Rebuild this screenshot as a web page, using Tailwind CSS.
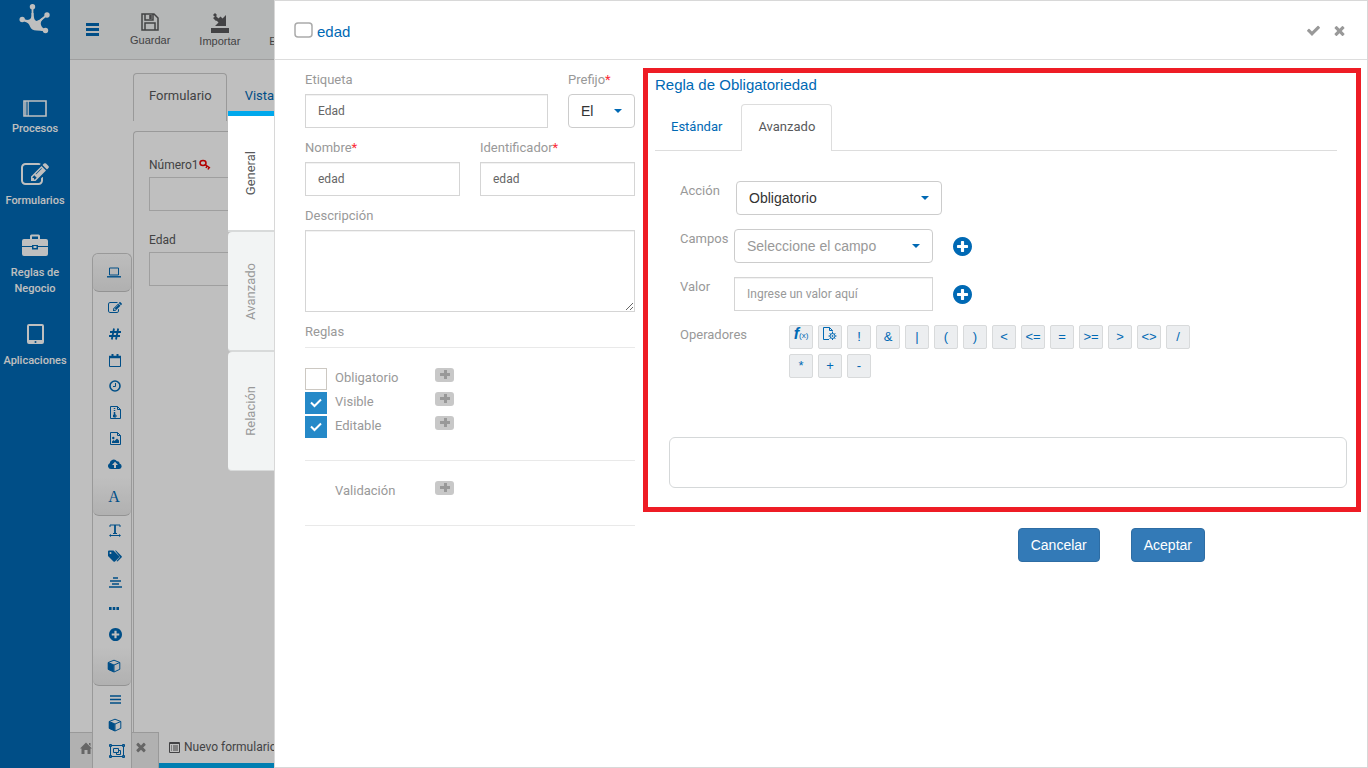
<!DOCTYPE html>
<html lang="es">
<head>
<meta charset="utf-8">
<title>Nuevo formulario</title>
<script src="https://cdn.jsdelivr.net/npm/@tailwindcss/browser@4"></script>
</head>
<body class="relative flex h-screen overflow-hidden bg-white font-['Roboto',sans-serif] text-[13px] leading-5 text-[#58595b]">

<svg class="hidden" aria-hidden="true">
  <symbol id="edit" viewBox="0 0 1792 1792"><path d="M888 1184l116-116-152-152-116 116v56h96v96h56zm440-720q-16-16-33 1l-350 350q-17 17-1 33t33-1l350-350q17-17 1-33zm80 594v190q0 119-84.500 203.500t-203.500 84.500h-832q-119 0-203.500-84.500t-84.500-203.500v-832q0-119 84.500-203.500t203.500-84.500h832q63 0 117 25 15 7 18 23 3 17-9 29l-49 49q-14 14-32 8-23-6-45-6h-832q-66 0-113 47t-47 113v832q0 66 47 113t113 47h832q66 0 113-47t47-113v-126q0-13 9-22l64-64q15-15 35-7t20 29zm-96-738l288 288-672 672h-288v-288zm444 132l-92 92-288-288 92-92q28-28 68-28t68 28l152 152q28 28 28 68t-28 68z"/></symbol>
  <symbol id="plus-circle" viewBox="128 128 1536 1536"><path d="M1344 960v-128q0-26-19-45t-45-19h-256v-256q0-26-19-45t-45-19h-128q-26 0-45 19t-19 45v256h-256q-26 0-45 19t-19 45v128q0 26 19 45t45 19h256v256q0 26 19 45t45 19h128q26 0 45-19t19-45v-256h256q26 0 45-19t19-45zm320-64q0 209-103 385.500t-279.500 279.500-385.500 103-385.500-103-279.500-279.500-103-385.500 103-385.500 279.500-279.500 385.500-103 385.500 103 279.500 279.500 103 385.500z"/></symbol>
  <symbol id="check" viewBox="0 0 1792 1792"><path d="M1671 566q0 40-28 68l-724 724-136 136q-28 28-68 28t-68-28l-136-136-362-362q-28-28-28-68t28-68l136-136q28-28 68-28t68 28l294 295 656-657q28-28 68-28t68 28l136 136q28 28 28 68z"/></symbol>
  <symbol id="times" viewBox="0 0 1792 1792"><path d="M1490 1322q0 40-28 68l-136 136q-28 28-68 28t-68-28l-294-294-294 294q-28 28-68 28t-68-28l-136-136q-28-28-28-68t28-68l294-294-294-294q-28-28-28-68t28-68l136-136q28-28 68-28t68 28l294 294 294-294q28-28 68-28t68 28l136 136q28 28 28 68t-28 68l-294 294 294 294q28 28 28 68z"/></symbol>
  <symbol id="cube" viewBox="0 0 14 14"><path d="M1 3.500 6.800 6v7L1 10.500z"/><path d="M1.200 3.500 7 1.200l5.800 2.300v6.800L7 13 1.200 10.400zM7 6l5.800-2.500M1.200 3.500 7 6v7" fill="none" stroke="currentColor" stroke-linejoin="round"/></symbol>
  <symbol id="caret" viewBox="0 0 8 4"><path d="M0 0h8L4 4z"/></symbol>
  <symbol id="add" viewBox="0 0 19 14"><rect width="19" height="14" rx="3" fill="#c8c8c8"/><path d="M9 2h3v3h3v3h-3v3H9V8H5V5h4z" fill="#999"/></symbol>
</svg>

<nav class="flex w-[70px] shrink-0 flex-col items-center bg-[#0069b4] text-center text-[11px] leading-4 font-medium text-white" aria-label="Principal">
  <svg class="mt-1 h-8 w-8" viewBox="0 0 32 32" fill="currentColor" aria-hidden="true"><g fill="none" stroke="currentColor" stroke-width="1.800"><path d="M13.500 3v10q0 6-10 2.500M12 20q7-1 11-5l5-4M15 23l11 4"/></g><path d="M12.500 9h2q0 7 3 8 3-.5 5.500-3l1 1q-3 3-2 6 1 3 5 4.500v2q-6-1-9.500-1-5 0-6.500-4-1-4-6-5l.5-2q8 2.500 7-6.500z"/><circle cx="13.500" cy="2.800" r="2.700"/><circle cx="3.200" cy="15.500" r="2.700"/><circle cx="28" cy="11" r="2.700"/><circle cx="26.500" cy="26.500" r="2.700"/></svg>
  <a href="#" class="mt-16 flex flex-col items-center"><svg class="h-[17px] w-6" viewBox="0 0 24 17" fill="none" stroke="currentColor" aria-hidden="true"><path d="M1 1h22v15H1z" stroke-width="1.600"/><path d="M2.800 1v15M5.200 1v15" stroke-width="1.200"/></svg><span class="mt-1">Procesos</span></a>
  <a href="#" class="mt-6 flex flex-col items-center"><svg class="h-7 w-7" fill="currentColor" aria-hidden="true"><use href="#edit"/></svg><span class="mt-1">Formularios</span></a>
  <a href="#" class="mt-[25px] flex w-16 flex-col items-center"><svg class="h-[23px] w-[26px]" viewBox="0 0 26 23" fill="currentColor" aria-hidden="true"><path d="M8 5V2q0-1.500 1.500-1.500h7Q18 .5 18 2v3h6q2 0 2 2v5H16v-1h-6v1H0V7q0-2 2-2zm2 0h6V2.500h-6zM0 13h10v2.500h6V13h10v7q0 2-2 2H2q-2 0-2-2zm11.500-1h3v2h-3z"/></svg><span class="mt-2">Reglas de Negocio</span></a>
  <a href="#" class="mt-[25px] flex flex-col items-center"><svg class="h-6 w-[17px]" viewBox="0 0 17 24" fill="currentColor" fill-rule="evenodd" aria-hidden="true"><path d="M2 2h13q2 0 2 2v16q0 2-2 2H2q-2 0-2-2V4q0-2 2-2zm0 2v14h13V4zm6.500 15a1 1 0 100 2 1 1 0 000-2z"/></svg><span class="mt-[7px]">Aplicaciones</span></a>
</nav>

<div class="flex min-w-0 flex-1 flex-col">
  <header class="flex h-[60px] shrink-0 items-center border-b border-[#d4d4d4] bg-[#f2f4f4] pl-4 font-['Liberation_Sans',sans-serif] text-[11px] leading-3">
    <button aria-label="Menú" class="mr-[31px] text-[#0069b4]"><svg class="h-[13px] w-[13px]" viewBox="0 0 13 13" fill="currentColor"><path d="M0 0h13v3H0zM0 5h13v3H0zM0 10h13v3H0z"/></svg></button>
    <button class="mr-[29px] flex flex-col items-center gap-[3px]"><svg class="h-[18px] w-[18px]" viewBox="0 0 18 18" fill="none" stroke="currentColor" stroke-width="1.500"><path d="M1 1h12l4 4v12H1zM4 1v6h8V1M4 17v-7h10v7"/><path d="M9.500 2v4" stroke-width="2.500"/></svg>Guardar</button>
    <button class="mr-[29px] flex flex-col items-center gap-[2px]"><svg class="h-[20px] w-5" viewBox="0 0 20 20" fill="currentColor"><path d="M1 15h18v5H1zM16 2v11H5l3.500-3.500-2-2 4-4 2 2zM3 2l2-2 2 2-2 2zM6 3l3 3-3 2-3-3z"/></svg>Importar</button>
    <button class="mt-[22px]">Exportar</button>
  </header>
  <main class="ml-[63px] flex flex-1 flex-col pt-[13px]">
    <div class="flex">
      <a href="#" class="h-12 rounded-t border border-b-0 border-[#ccc] pt-3 pr-[14px] pl-[15px]">Formulario</a>
      <a href="#" class="px-[18px] py-[13px] text-[#0069b4]">Vista previa</a>
    </div>
    <form class="mt-[10px] flex flex-1 flex-col rounded-tl border-t border-l border-[#ccc] pt-[23px] pl-[15px] text-xs leading-5">
      <label for="numero" class="flex items-center">Número1<svg class="h-3 w-3" viewBox="0 0 12 12" fill="none" stroke="#e00" stroke-width="1.500" aria-hidden="true"><ellipse cx="4" cy="4" rx="3" ry="2.500"/><path d="M6 5.500 11 9M8 7 7 9M10 8.500 9 10.500"/></svg></label>
      <input id="numero" class="mt-[2px] h-[34px] border border-[#d5d5d5]">
      <label for="campo-edad" class="mt-[19px]">Edad</label>
      <input id="campo-edad" class="mt-[2px] h-[34px] border border-[#d5d5d5]">
    </form>
  </main>
  <footer class="flex h-9 shrink-0">
    <div class="flex w-[89px] items-center justify-between border-t border-r border-[#ccc] bg-[#ececec] px-[10px] text-[#888]">
      <a href="#" aria-label="Inicio"><svg class="-mt-[6px] h-3 w-3" viewBox="0 0 12 12" fill="currentColor"><path d="M6 .5 12 6.500H10.500V12H7.500V8h-3v4h-3V6.500H0zM9 1h1.500v3L9 2.500z"/></svg></a>
      <button aria-label="Cerrar"><svg class="-mt-[7px] h-[14px] w-[14px]" fill="currentColor"><use href="#times"/></svg></button>
    </div>
    <a href="#" class="flex flex-1 items-center gap-1 border-b-[5px] border-[#00a8ec] pb-px pl-[10px] text-xs"><svg class="h-[11px] w-[11px]" viewBox="0 0 11 11" fill="none" stroke="currentColor" aria-hidden="true"><path d="M.5.5h10v10H.5z"/><path d="M.5 1.500h10M2 4h1M4 4h5M2 6h1M4 6h5M2 8h1M4 8h5"/></svg>Nuevo formulario</a>
  </footer>
</div>

<!-- Floating component palette -->
<aside class="absolute top-[253px] bottom-0 left-[92px] w-10 rounded-t-md border border-b-0 border-[#ccc] bg-white text-[#0069b4]" aria-label="Componentes">
  <button aria-label="Campos" class="flex h-[38px] w-full items-center justify-center rounded-md border-b border-[#c5c5c5] bg-linear-to-b from-[#fcfcfc] to-[#ececec] pl-1"><svg class="h-[11px] w-[14px]" viewBox="0 0 14 11" fill="none" stroke="currentColor"><path d="M2.500 1h9v7h-9z"/><path d="M0 9.800h14" stroke-width="1.400"/></svg></button>
  <div class="flex flex-col items-center pt-[3px] pl-[6px]">
    <button aria-label="Texto" class="flex h-[26px] items-center"><svg class="h-[14px] w-[14px]" fill="currentColor"><use href="#edit"/></svg></button>
    <button aria-label="Número" class="flex h-[26px] items-center"><svg class="h-3 w-3" viewBox="0 0 12 12" fill="none" stroke="currentColor" stroke-width="1.800"><path d="M5 .5 2.800 11.500M9.200.5 7 11.500M1 4h11M0 8h11"/></svg></button>
    <button aria-label="Fecha" class="flex h-[26px] items-center"><svg class="h-[13px] w-3" viewBox="0 0 12 13" fill="none" stroke="currentColor"><path d="M.5 2.500h11v10H.5z"/><path d="M0 3h12" stroke-width="2.500"/><path d="M3.500 0v3M8.500 0v3" stroke-width="2"/></svg></button>
    <button aria-label="Hora" class="flex h-[26px] items-center"><svg class="h-3 w-3" viewBox="0 0 12 12" fill="none" stroke="currentColor"><circle cx="6" cy="6" r="5" stroke-width="1.600"/><path d="M6.500 3v3.500H4"/></svg></button>
    <button aria-label="Archivo" class="flex h-[26px] items-center"><svg class="h-[13px] w-[11px]" viewBox="0 0 11 13" fill="none" stroke="currentColor"><path d="M.5.500h7l3 3v9H.5zM7.500.500v3h3"/><path d="M4.500 2v1M4.500 4v1M4.500 6v5" stroke-width="1.500"/><path d="M3.500 9h2.500v2H3.500z"/></svg></button>
    <button aria-label="Imagen" class="flex h-[26px] items-center"><svg class="h-[13px] w-[11px]" viewBox="0 0 11 13" fill="none" stroke="currentColor"><path d="M.5.500h7l3 3v9H.5zM7.500.500v3h3"/><path d="M2 11V9.500l1.500-1.500 1 1L7 6.500 9 8.500V11z" fill="currentColor" stroke="none"/><circle cx="3.300" cy="6" r="1.200" fill="currentColor" stroke="none"/></svg></button>
    <button aria-label="Subir" class="flex h-[26px] items-center"><svg class="h-[10px] w-[14px]" viewBox="0 0 14 10" fill="currentColor" fill-rule="evenodd"><path d="M3 10a3 3 0 01-1.300-5.700A4 4 0 019 2.300a2 2 0 012.500 2.200A2.800 2.800 0 0111.200 10zM7 2.800 4 6h2v3h2V6h2z"/></svg></button>
  </div>
  <button aria-label="Etiquetas" class="flex h-[39px] w-full items-center justify-center rounded-b-md border-b border-[#c5c5c5] bg-linear-to-b from-white to-[#ececec] pt-px pl-1 font-['Liberation_Serif',serif] text-base">A</button>
  <div class="flex flex-col items-center pt-px pl-[6px]">
    <button aria-label="Título" class="flex h-[26px] items-center"><svg class="h-[13px] w-3" viewBox="0 0 12 13" fill="none" stroke="currentColor"><path d="M1 3V1h10v2M4 9.500h4"/><path d="M6 1v8.500" stroke-width="1.800"/><path d="M1 11.500h10"/><path d="M0 11.500 2 10v3zM12 11.500 10 10v3z" fill="currentColor" stroke="none"/></svg></button>
    <button aria-label="Etiqueta" class="flex h-[26px] items-center"><svg class="h-3 w-[14px]" viewBox="0 0 14 12" fill="currentColor" fill-rule="evenodd"><path d="M0 1.500Q0 .5 1 .5h4.500L11 6q.7.700 0 1.500L7 11.500q-.7.500-1.500 0L0 6zm2.500.5a1 1 0 100 2 1 1 0 000-2zM7 .5h1L13.500 6q.7.700 0 1.500l-4 4-1-.5L12 7z"/></svg></button>
    <button aria-label="Centrar" class="flex h-[26px] items-center"><svg class="h-[11px] w-[13px]" viewBox="0 0 13 11" stroke="currentColor" stroke-width="1.500"><path d="M4 1h5M1 4h11M3 7h7M0 10h13"/></svg></button>
    <button aria-label="Puntos" class="flex h-[26px] items-center"><svg class="mr-[3px] h-[3px] w-[10px]" viewBox="0 0 10 3" fill="currentColor"><rect width="2.600" height="3"/><rect x="3.700" width="2.600" height="3"/><rect x="7.400" width="2.600" height="3"/></svg></button>
    <button aria-label="Agregar" class="flex h-[26px] items-center"><svg class="h-[13px] w-[13px]" fill="currentColor"><use href="#plus-circle"/></svg></button>
  </div>
  <button aria-label="Contenedores" class="flex h-[39px] w-full items-center justify-center rounded-b-md border-b border-[#c5c5c5] bg-linear-to-b from-white to-[#ececec] pl-1"><svg class="h-[14px] w-[14px]" fill="currentColor"><use href="#cube"/></svg></button>
  <div class="flex flex-col items-center pl-[6px]">
    <button aria-label="Filas" class="flex h-[26px] items-center"><svg class="h-[9px] w-[11px]" viewBox="0 0 11 9" stroke="currentColor" stroke-width="1.600"><path d="M0 1h11M0 4.500h11M0 8h11"/></svg></button>
    <button aria-label="Cubo" class="flex h-[26px] items-center"><svg class="h-[14px] w-[14px]" fill="currentColor"><use href="#cube"/></svg></button>
    <button aria-label="Grupo" class="flex h-[26px] items-center"><svg class="ml-[3px] h-[14px] w-4" viewBox="0 0 16 14" fill="none" stroke="currentColor"><path d="M1.500 1.500h13v11h-13zM4.500 4.500h5v4h-5zM9.500 6.500h2v4h-4v-2"/><path d="M.5.500h2v2h-2zM13.500.500h2v2h-2zM.5 11.500h2v2h-2zM13.500 11.500h2v2h-2z"/></svg></button>
  </div>
</aside>

<div class="absolute inset-0 bg-black/25"></div>

<!-- Properties drawer, with its side tabs -->
<div class="absolute inset-y-0 right-0 left-[228px] flex items-start">
  <div class="mt-[111px] flex w-[46px] shrink-0 flex-col" role="tablist" aria-label="Propiedades">
    <button class="flex h-[121px] items-center justify-center border-t-[5px] border-b-2 border-t-[#00a8ec] border-b-[#d8dada] bg-white"><span class="rotate-180 [writing-mode:vertical-rl]">General</span></button>
    <button class="flex h-[120px] items-center justify-center rounded-l border-b-2 border-[#d8dada] bg-[#f2f4f4] text-[#999]"><span class="rotate-180 [writing-mode:vertical-rl]">Avanzado</span></button>
    <button class="flex h-[119px] items-center justify-center rounded-l border-b border-[#d8dada] bg-[#f2f4f4] text-[#999]"><span class="rotate-180 [writing-mode:vertical-rl]">Relación</span></button>
  </div>

  <section class="h-full min-w-0 flex-1 border border-[#d8d8d8] bg-white text-[#999]">
    <header class="flex h-[59px] items-center border-b border-[#ddd] pr-5 pl-[19px]">
      <svg class="h-[17px] w-[19px]" viewBox="0 0 19 17" fill="none" stroke="#aaa" stroke-width="1.500" aria-hidden="true"><rect x="1" y="1" width="17" height="14" rx="3"/></svg>
      <h1 class="ml-1 flex-1 pt-[3px] font-['Liberation_Sans',sans-serif] text-[15px] text-[#0069b4]">edad</h1>
      <button aria-label="Aceptar cambios" class="mr-[11px]"><svg class="h-[15px] w-[15px]" fill="currentColor"><use href="#check"/></svg></button>
      <button aria-label="Cerrar panel"><svg class="h-[15px] w-[15px]" fill="currentColor"><use href="#times"/></svg></button>
    </header>

    <div class="flex items-start gap-2 pr-[6px] pl-[30px]">
      <form class="flex w-[330px] shrink-0 flex-col gap-[10px] pt-[10px]">
        <div class="flex gap-5">
          <div class="flex min-w-0 flex-1 flex-col gap-1"><label for="etiqueta">Etiqueta</label><input id="etiqueta" value="Edad" class="h-[34px] w-full border border-[#d5d5d5] px-3 text-xs text-[#666] inset-shadow-2xs"></div>
          <div class="flex w-[67px] flex-col gap-1"><label for="prefijo">Prefijo<span class="text-red-500">*</span></label>
            <div class="relative"><select id="prefijo" class="h-[34px] w-full appearance-none rounded border border-[#ccc] bg-white px-3 font-['Liberation_Sans',sans-serif] text-sm text-[#333]"><option>El</option></select><svg class="pointer-events-none absolute top-[15px] right-[13px] h-1 w-2" fill="#0069b4"><use href="#caret"/></svg></div></div>
        </div>
        <div class="flex gap-5">
          <div class="flex min-w-0 flex-1 flex-col gap-1"><label for="nombre">Nombre<span class="text-red-500">*</span></label><input id="nombre" value="edad" class="h-[34px] w-full border border-[#d5d5d5] px-3 text-xs text-[#666] inset-shadow-2xs"></div>
          <div class="flex min-w-0 flex-1 flex-col gap-1"><label for="ident">Identificador<span class="text-red-500">*</span></label><input id="ident" value="edad" class="h-[34px] w-full border border-[#d5d5d5] px-3 text-xs text-[#666] inset-shadow-2xs"></div>
        </div>
        <div class="flex flex-col gap-1"><label for="desc">Descripción</label><textarea id="desc" class="h-[82px] w-full border border-[#d5d5d5] px-3 py-2 text-xs inset-shadow-2xs"></textarea></div>
        <fieldset>
          <legend class="w-full border-b border-[#e9e9e9] pb-[5px]">Reglas</legend>
          <div class="flex flex-col gap-[2px] border-b border-[#e9e9e9] pt-5 pb-[22px]">
            <div class="flex"><input type="checkbox" id="obl" class="h-[22px] w-[22px] appearance-none border border-[#ccc8c2] bg-white"><label for="obl" class="w-[108px] pl-2">Obligatorio</label><button type="button" aria-label="Regla de Obligatorio" class="flex"><svg class="h-[14px] w-[19px]"><use href="#add"/></svg></button></div>
            <div class="flex"><span class="relative flex"><input type="checkbox" id="vis" checked class="h-[22px] w-[22px] appearance-none bg-[#2589c8]"><svg class="pointer-events-none absolute top-1 left-1 h-[14px] w-[14px]" fill="none" stroke="white" stroke-width="2" viewBox="0 0 14 14" aria-hidden="true"><path d="M2 6.500l3.500 3.500L12 3.500"/></svg></span><label for="vis" class="w-[108px] pl-2">Visible</label><button type="button" aria-label="Regla de Visible" class="flex"><svg class="h-[14px] w-[19px]"><use href="#add"/></svg></button></div>
            <div class="flex"><span class="relative flex"><input type="checkbox" id="edi" checked class="h-[22px] w-[22px] appearance-none bg-[#2589c8]"><svg class="pointer-events-none absolute top-1 left-1 h-[14px] w-[14px]" fill="none" stroke="white" stroke-width="2" viewBox="0 0 14 14" aria-hidden="true"><path d="M2 6.500l3.500 3.500L12 3.500"/></svg></span><label for="edi" class="w-[108px] pl-2">Editable</label><button type="button" aria-label="Regla de Editable" class="flex"><svg class="h-[14px] w-[19px]"><use href="#add"/></svg></button></div>
          </div>
          <div class="flex border-b border-[#e9e9e9] pt-5 pb-6 pl-[30px]"><span class="w-[100px]">Validación</span><button type="button" aria-label="Regla de Validación" class="flex"><svg class="h-[14px] w-[19px]"><use href="#add"/></svg></button></div>
        </fieldset>
      </form>

      <div class="min-w-0 flex-1 pt-2">
        <section class="border-[5px] border-[#ee1c25] pt-[2px] pr-[9px] pb-[19px] pl-[7px]">
          <h2 class="font-['Liberation_Sans',sans-serif] text-[15px] text-[#0069b4]">Regla de Obligatoriedad</h2>
          <div class="mt-[9px] mr-[10px] flex gap-[3px] border-b border-[#ddd]">
            <a href="#" class="px-4 py-[13px] text-[#0069b4]">Estándar</a>
            <a href="#" class="-mb-px rounded-t border border-b-0 border-[#ddd] bg-white px-4 pt-3 pb-[14px] text-[#58595b]">Avanzado</a>
          </div>
          <form class="mt-[30px] flex flex-col gap-[14px] pl-[25px]">
            <div class="flex"><label for="accion" class="w-14">Acción</label>
              <div class="relative w-[206px]"><select id="accion" class="h-[34px] w-full appearance-none rounded border border-[#ccc] bg-white px-3 font-['Liberation_Sans',sans-serif] text-sm text-[#333]"><option>Obligatorio</option></select><svg class="pointer-events-none absolute top-[15px] right-[13px] h-1 w-2" fill="#0069b4"><use href="#caret"/></svg></div></div>
            <div class="flex"><label for="campos" class="w-[54px]">Campos</label>
              <div class="relative w-[199px]"><select id="campos" class="h-[34px] w-full appearance-none rounded border border-[#ccc] bg-white px-3 font-['Liberation_Sans',sans-serif] text-sm text-[#999]"><option>Seleccione el campo</option></select><svg class="pointer-events-none absolute top-[15px] right-[13px] h-1 w-2" fill="#0069b4"><use href="#caret"/></svg></div>
              <button type="button" aria-label="Agregar campo" class="ml-5"><svg class="h-[19px] w-[19px]" fill="#0069b4"><use href="#plus-circle"/></svg></button></div>
            <div class="flex"><label for="valor" class="w-[54px]">Valor</label>
              <input id="valor" placeholder="Ingrese un valor aquí" class="h-[34px] w-[199px] border border-[#d5d5d5] px-3 text-xs inset-shadow-2xs placeholder:text-[#999]">
              <button type="button" aria-label="Agregar valor" class="ml-5"><svg class="h-[19px] w-[19px]" fill="#0069b4"><use href="#plus-circle"/></svg></button></div>
            <div class="flex"><span class="w-[109px]">Operadores</span>
              <div class="flex w-[406px] flex-wrap gap-[5px] font-['Liberation_Sans',sans-serif] text-[#0069b4] *:flex *:h-6 *:w-6 *:items-center *:justify-center *:rounded-xs *:border *:border-[#d8dadb] *:bg-[#eceef0]">
                <button type="button" class="pb-[6px]"><span class="text-base font-bold italic">f</span><span class="pt-[3px] text-[8px]">(x)</span></button>
                <button type="button" aria-label="Función"><svg class="mb-[7px] h-[14px] w-[14px]" viewBox="0 0 14 14" fill="none" stroke="currentColor"><path d="M6 12.500H.5V.500h6l3 3v1M6.500.500v3h3"/><circle cx="9.500" cy="9" r="2.500" stroke-width="1"/><circle cx="9.500" cy="9" r=".6"/><path d="M9.500 5v1.500M9.500 11.500V13M5.500 9H7M12 9h1.500M6.700 6.200l1 1M11.300 10.800l1 1M12.300 6.200l-1 1M7.700 10.800l-1 1"/></svg></button>
                <button type="button">!</button><button type="button">&amp;</button><button type="button">|</button><button type="button">(</button><button type="button">)</button><button type="button">&lt;</button><button type="button">&lt;=</button><button type="button">=</button><button type="button">&gt;=</button><button type="button">&gt;</button><button type="button">&lt;&gt;</button><button type="button">/</button><button type="button">*</button><button type="button">+</button><button type="button">-</button>
              </div></div>
          </form>
          <div class="mt-[59px] ml-[14px] h-[51px] rounded-md border border-[#d5d8d9]"></div>
        </section>
        <div class="mt-4 mr-[156px] flex justify-end gap-[31px] font-['Liberation_Sans',sans-serif] text-sm text-white">
          <button class="rounded border border-[#2e6da4] bg-[#337ab7] px-3 py-[6px]">Cancelar</button>
          <button class="rounded border border-[#2e6da4] bg-[#337ab7] px-3 py-[6px]">Aceptar</button>
        </div>
      </div>
    </div>
  </section>
</div>
</body>
</html>
